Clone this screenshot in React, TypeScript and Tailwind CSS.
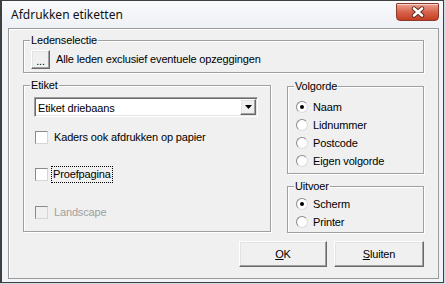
import React from "react";

const raised =
  "bg-[#f0f0f0] border border-t-white border-l-white border-b-[#696969] border-r-[#696969] shadow-[inset_-1px_-1px_0_#a0a0a0,inset_1px_1px_0_#e3e3e3]";

function Group({
  label,
  className,
  children,
}: {
  label: string;
  className: string;
  children?: React.ReactNode;
}) {
  return (
    <div
      className={
        "relative border border-[#a0a0a0] shadow-[inset_1px_1px_0_#ffffff,1px_1px_0_#ffffff] " +
        className
      }
    >
      <span className="absolute left-[6px] top-[-7px] bg-[#f0f0f0] px-[1px] leading-[13px]">
        {label}
      </span>
      {children}
    </div>
  );
}

function Check({
  label,
  disabled,
  focus,
  className,
}: {
  label: string;
  disabled?: boolean;
  focus?: boolean;
  className?: string;
}) {
  return (
    <div className={"flex h-[13px] items-center " + (className ?? "")}>
      <div
        className={
          "h-[13px] w-[13px] border border-t-[#8a8a8a] border-l-[#8a8a8a] border-b-[#d6d6d6] border-r-[#d6d6d6] " +
          (disabled ? "bg-[#f0f0f0]" : "bg-white")
        }
      />
      {focus ? (
        <span className="ml-[3px] border border-dotted border-black px-[1px] leading-[15px]">
          {label}
        </span>
      ) : (
        <span
          className={
            "ml-[6px] leading-[13px] " + (disabled ? "text-[#a0a0a0]" : "")
          }
        >
          {label}
        </span>
      )}
    </div>
  );
}

function Radio({ label, checked }: { label: string; checked?: boolean }) {
  return (
    <div className="flex h-[12px] items-center">
      <div className="flex h-[12px] w-[12px] items-center justify-center rounded-full border border-t-[#8a8a8a] border-l-[#8a8a8a] border-b-[#dcdcdc] border-r-[#dcdcdc] bg-white">
        {checked ? <div className="h-[4px] w-[4px] rounded-full bg-black" /> : null}
      </div>
      <span className="ml-[5px] leading-[13px]">{label}</span>
    </div>
  );
}

export default function App() {
  return (
    <div className="flex h-[284px] w-[446px] bg-[#cfdce6] font-['Liberation_Sans',Arial,sans-serif] text-[11px] tracking-[-0.15px] text-black">
      <div className="flex h-[283px] w-[444px] flex-col border border-l-2 border-[#3f3f3f] bg-[#f1f4f7]">
        {/* Title bar */}
        <div className="flex h-[27px] items-start justify-between bg-gradient-to-b from-[#f9fafc] to-[#eef1f5]">
          <span className="mt-[6px] pl-[9px] font-['Noto_Sans',sans-serif] text-[12px] leading-[16px] tracking-normal text-[#111]">
            Afdrukken etiketten
          </span>
          <div className="mr-[4px] mt-[2px] flex h-[18px] w-[43px] items-center justify-center rounded-b-[4px] rounded-t-[1px] border border-[#8b3b2b] bg-gradient-to-b from-[#eba391] via-[#d8634b] to-[#c43d22] shadow-[inset_0_1px_0_#f5d2c8]">
            <svg width="16" height="12" viewBox="0 0 16 12">
              <path d="M4 2.5 L12 9.5 M12 2.5 L4 9.5" stroke="#5a2b22" strokeWidth="4.4" strokeLinecap="round" />
              <path d="M4 2.5 L12 9.5 M12 2.5 L4 9.5" stroke="#ffffff" strokeWidth="2.6" strokeLinecap="round" />
            </svg>
          </div>
        </div>
        {/* Client area */}
        <div className="ml-[6px] mr-[4px] flex h-[251px] flex-col border border-[#9a9a9a] bg-[#f0f0f0] pl-[14px] pt-[11px] shadow-[inset_1px_1px_0_#ffffff]">
          <Group label="Ledenselectie" className="h-[33px] w-[401px] shrink-0 pl-[7px] pt-[9px]">
            <div className="flex items-center">
              <div className={"flex h-[19px] w-[19px] items-end justify-center pb-[3px] leading-[8px] " + raised}>
                ...
              </div>
              <span className="ml-[6px] leading-[13px]">
                Alle leden exclusief eventuele opzeggingen
              </span>
            </div>
          </Group>

          <div className="mt-[12px] flex">
            <Group label="Etiket" className="h-[147px] w-[248px] shrink-0 pl-[10px] pt-[11px]">
              <div className="flex h-[20px] w-[224px] border border-t-[#a0a0a0] border-l-[#a0a0a0] border-b-white border-r-white bg-white shadow-[inset_1px_1px_0_#696969,inset_-1px_-1px_0_#e3e3e3]">
                <span className="ml-[3px] mt-[3px] flex-1 leading-[14px]">Etiket driebaans</span>
                <div className={"mr-[1px] mt-[1px] flex h-[16px] w-[16px] items-center justify-center " + raised}>
                  <svg width="7" height="4" viewBox="0 0 7 4">
                    <path d="M0 0 H7 L3.5 4 Z" fill="#000" />
                  </svg>
                </div>
              </div>
              <Check label="Kaders ook afdrukken op papier" className="ml-[1px] mt-[14px]" />
              <Check label="Proefpagina" focus className="ml-[1px] mt-[24px]" />
              <Check label="Landscape" disabled className="ml-[1px] mt-[25px]" />
            </Group>

            <div className="ml-[16px] flex w-[137px] flex-col">
              <Group label="Volgorde" className="mt-[1px] flex h-[88px] flex-col gap-[6px] pl-[8px] pt-[14px]">
                <Radio label="Naam" checked />
                <Radio label="Lidnummer" />
                <Radio label="Postcode" />
                <Radio label="Eigen volgorde" />
              </Group>
              <Group label="Uitvoer" className="mt-[12px] flex h-[47px] flex-col gap-[6px] pl-[8px] pt-[11px]">
                <Radio label="Scherm" checked />
                <Radio label="Printer" />
              </Group>
            </div>
          </div>

          <div className="mt-[8px] flex w-[401px] justify-end gap-[7px]">
            <div className={"flex h-[26px] w-[88px] items-center justify-center " + raised}>
              <span>
                <span className="underline">O</span>K
              </span>
            </div>
            <div className={"flex h-[26px] w-[90px] items-center justify-center " + raised}>
              <span>
                <span className="underline">S</span>luiten
              </span>
            </div>
          </div>
        </div>
      </div>
    </div>
  );
}
